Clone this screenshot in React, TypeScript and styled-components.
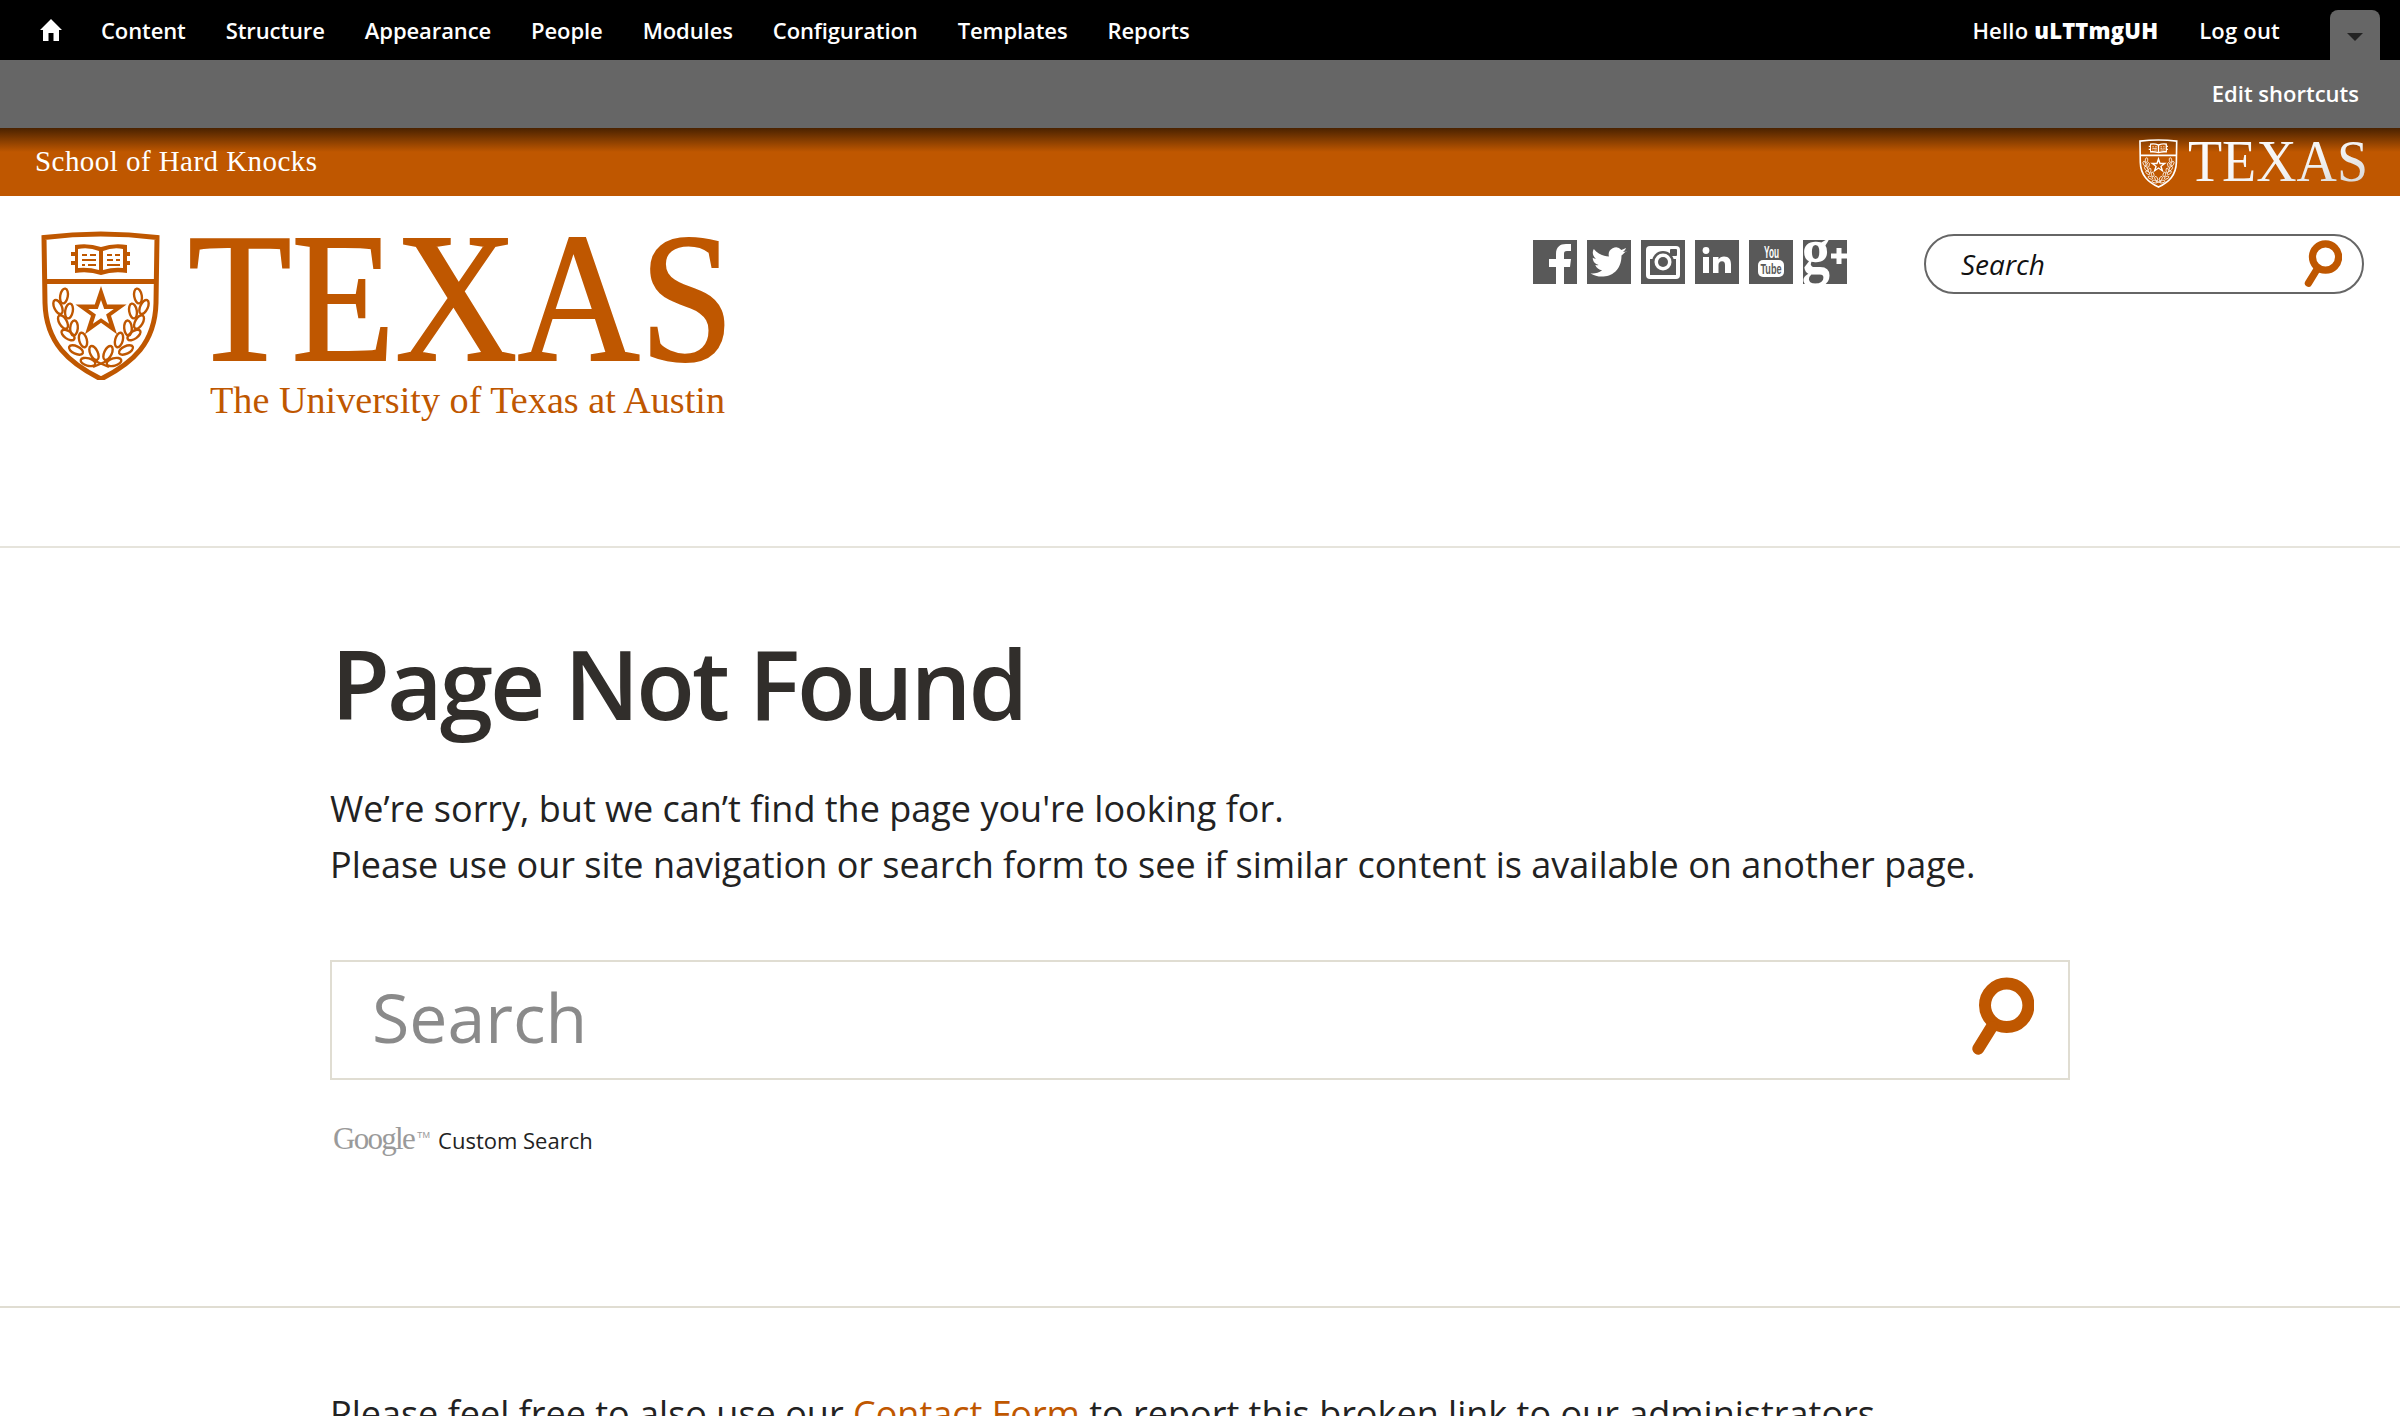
import React from "react";
import styled, { createGlobalStyle } from "styled-components";

const orange = "#bf5700";

const Global = createGlobalStyle`
  html, body { margin: 0; padding: 0; background: #fff; overflow: hidden; }
  body { font-family: "Open Sans", "Liberation Sans", sans-serif; color: #222; }
`;

const Page = styled.div`
  height: 100vh;
  overflow: hidden;
`;

const Toolbar = styled.nav`
  height: 60px;
  background: #000;
  display: flex;
  align-items: center;
  padding-left: 40px;
  position: relative;
`;

const HomeLink = styled.a`
  width: 22px;
  height: 22px;
  margin-right: 39px;
  display: flex;
`;

const NavList = styled.div`
  display: flex;
  gap: 40px;
  flex: 1;
`;

const NavItem = styled.a`
  color: #fff;
  font-size: 22px;
  font-weight: 600;
  letter-spacing: -0.1px;
  white-space: nowrap;
`;

const UserArea = styled.div`
  display: flex;
  align-items: center;
  gap: 41px;
  margin-right: 50px;
  color: #fff;
  font-size: 22px;
  font-weight: 600;
  letter-spacing: 0.2px;
`;

const TrayButton = styled.div`
  width: 50px;
  height: 50px;
  margin: 10px 20px 0 0;
  background: #666;
  border-radius: 8px 8px 0 0;
  display: flex;
  align-items: center;
  justify-content: center;
`;

const Caret = styled.span`
  width: 0;
  height: 0;
  margin-top: 4px;
  border-left: 8px solid transparent;
  border-right: 8px solid transparent;
  border-top: 8px solid #222;
`;

const ShortcutBar = styled.div`
  height: 68px;
  box-sizing: border-box;
  padding: 0 41px 2px 0;
  background: #666;
  display: flex;
  align-items: center;
  justify-content: flex-end;
  color: #fff;
  font-size: 22px;
  font-weight: 600;
`;

const BrandBar = styled.div`
  height: 68px;
  box-sizing: border-box;
  background: linear-gradient(#4a2200 0, ${orange} 24px);
  display: flex;
  align-items: center;
  justify-content: space-between;
  padding: 0 32px 2px 35px;
`;

const SchoolName = styled.a`
  color: #fff;
  font-family: "Liberation Serif", serif;
  font-size: 29px;
  letter-spacing: 0.45px;
`;

const BrandLogo = styled.div`
  display: flex;
  align-items: center;
  gap: 10px;
  margin-top: 4px;
`;

const Header = styled.header`
  height: 352px;
  display: flex;
  justify-content: space-between;
  align-items: flex-start;
  padding: 32px 36px 0 41px;
  border-bottom: 2px solid #e6e4dc;
  box-sizing: border-box;
`;

const Logo = styled.a`
  display: flex;
  align-items: flex-start;
  gap: 28px;
`;

const WordmarkBox = styled.div`
  margin-top: 4px;
  display: flex;
`;

const Tools = styled.div`
  display: flex;
  align-items: flex-start;
  gap: 77px;
  margin-top: 6px;
`;

const Socials = styled.div`
  display: flex;
  gap: 10px;
  margin-top: 6px;
`;

const HeaderSearch = styled.div`
  width: 440px;
  height: 60px;
  box-sizing: border-box;
  border: 2px solid #666;
  border-radius: 30px;
  display: flex;
  align-items: center;
  justify-content: space-between;
  padding: 0 20px 0 35px;
`;

const HeaderSearchLabel = styled.span`
  font-style: italic;
  font-size: 28px;
  color: #111;
`;

const Main = styled.main`
  margin-left: 330px;
  width: 1740px;
  height: 758px;
  padding-top: 75px;
  box-sizing: border-box;
`;

const Title = styled.h1`
  margin: 0 0 0 1px;
  font-size: 96px;
  line-height: 120px;
  font-weight: 600;
  color: #312e2b;
  letter-spacing: -3px;
`;

const Lead = styled.p`
  margin: 38px 0 0;
  font-size: 36px;
  line-height: 56px;
  color: #222;
`;

const BigSearch = styled.div`
  margin-top: 67px;
  height: 120px;
  box-sizing: border-box;
  border: 2px solid #e0ddd2;
  display: flex;
  align-items: center;
  justify-content: space-between;
  padding: 0 34px 0 40px;
`;

const BigSearchLabel = styled.span`
  font-size: 68px;
  color: #8a8a8a;
  margin-bottom: 8px;
`;

const BigSearchIcon = styled.span`
  display: flex;
  margin-bottom: 7px;
`;

const Attribution = styled.div`
  margin: 41px 0 0 3px;
  display: flex;
  align-items: baseline;
  gap: 8px;
`;

const GoogleMark = styled.span`
  font-family: "Liberation Serif", serif;
  font-size: 31px;
  color: #9a9a9a;
  letter-spacing: -1.7px;
`;

const Tm = styled.sup`
  font-family: "Liberation Sans", sans-serif;
  font-size: 9px;
  letter-spacing: 0;
  margin-left: 3px;
`;

const AttributionText = styled.span`
  font-size: 22px;
  color: #222;
`;

const Divider = styled.hr`
  margin: 0;
  border: 0;
  border-top: 2px solid #e0ddd2;
`;

const Foot = styled.p`
  margin: 78px 0 0 330px;
  font-size: 36px;
  line-height: 56px;
  color: #222;
`;

const FootLink = styled.a`
  color: ${orange};
`;

const leaves: [number, number, number][] = [
  [33, 75, 10], [27, 86, -25], [38, 90, 10], [32, 101, -30], [43, 107, 5], [37, 114, -55],
  [52, 119, -15], [45, 129, -65], [63, 132, -25], [57, 141, -75],
];

function Shield({ color, size }: { color: string; size: number }) {
  const paper = color === "#fff" ? orange : "#fff";
  return (
    <svg width={size} height={(size * 152) / 120} viewBox="10 7 120 152" fill="none">
      <path
        d="M13 16.500Q70 9.500 126 16.500L125 82C124 122 102 142 70 158C38 142 15 122 14 82Z"
        stroke={color}
        strokeWidth="5"
      />
      <path d="M14 60.500H125" stroke={color} strokeWidth="5" />
      <path d="M40 31h4v-7q14-2 26 2q12-4 26-2v7h3v4h-3v5h3v4h-3v8q-14-2-26 2q-12-4-26-2v-8h-4v-4h4v-5h-4z" fill={color} />
      <path d="M47 28q11-2 21 2v19q-10-3-21-2zM72 30q10-4 20-2v19q-10-1-20 2z" fill={paper} />
      <path d="M51 34h5M59 34h6M51 39h14M51 44h3M57 44h8M76 34h5M84 34h5M76 39h6M85 39h4M76 44h13" stroke={color} strokeWidth="2.200" />
      <path
        d="M70 65l6.200 18.400 19.400 0-15.600 11.400 6 18.400-16-11.400-16 11.400 6-18.400-15.600-11.400 19.400 0z"
        fill={color}
      />
      <path d="M70 79l3.200 9 9.600 0-7.700 5.600 3 9.200-8.100-5.600-8.100 5.600 3-9.200-7.700-5.600 9.600 0z" fill={paper} />
      {leaves.map(([x, y, r], i) => (
        <g key={i}>
          <ellipse cx={x} cy={y} rx="3.800" ry="7.500" transform={`rotate(${r} ${x} ${y})`} stroke={color} strokeWidth="2.400" />
          <ellipse cx={140 - x} cy={y} rx="3.800" ry="7.500" transform={`rotate(${-r} ${140 - x} ${y})`} stroke={color} strokeWidth="2.400" />
        </g>
      ))}
      <path d="M62 146l14-6M78 146l-14-6" stroke={color} strokeWidth="2.400" />
    </svg>
  );
}

function Wordmark() {
  return (
    <svg width="540" height="190" viewBox="0 0 540 190">
      <text x="-1" y="128" fontFamily="Liberation Serif, serif" fontSize="184" fill={orange} stroke={orange} strokeWidth="2" textLength="546" lengthAdjust="spacingAndGlyphs">
        TEXAS
      </text>
      <text x="21" y="181" fontFamily="Liberation Serif, serif" fontSize="38" fill={orange} textLength="515" lengthAdjust="spacingAndGlyphs">
        The University of Texas at Austin
      </text>
    </svg>
  );
}

function SmallWordmark() {
  return (
    <svg width="180" height="48" viewBox="0 0 180 48">
      <defs>
        <linearGradient id="silver" x1="0" y1="0" x2="1" y2="1">
          <stop offset="0" stopColor="#ffffff" />
          <stop offset="0.6" stopColor="#f2f2f2" />
          <stop offset="1" stopColor="#cfcfcf" />
        </linearGradient>
      </defs>
      <text x="0" y="42" fontFamily="Liberation Serif, serif" fontSize="60" fill="url(#silver)" textLength="180" lengthAdjust="spacingAndGlyphs">
        TEXAS
      </text>
    </svg>
  );
}

function Magnifier({ size }: { size: number }) {
  return (
    <svg width={size} height={(size * 79) / 63} viewBox="0 0 63 79" fill="none" stroke={orange}>
      <circle cx="35.700" cy="28.300" r="21.700" strokeWidth="12" />
      <path d="M20.700 50L7.300 71.700" strokeWidth="12" strokeLinecap="round" />
    </svg>
  );
}

function Tile({ children }: { children: React.ReactNode }) {
  return (
    <svg width="44" height="44" viewBox="0 0 44 44">
      <rect width="44" height="44" fill="#595959" />
      {children}
    </svg>
  );
}

const navItems = ["Content", "Structure", "Appearance", "People", "Modules", "Configuration", "Templates", "Reports"];

export default function App() {
  return (
    <Page>
      <Global />
      <Toolbar>
        <HomeLink>
          <svg viewBox="0 0 22 22" width="22" height="22" fill="#fff">
            <path d="M11 0L22 11H19V22H13.500V14H8.500V22H3V11H0Z" />
          </svg>
        </HomeLink>
        <NavList>
          {navItems.map((n) => (
            <NavItem key={n}>{n}</NavItem>
          ))}
        </NavList>
        <UserArea>
          <span>
            Hello <b>uLTTmgUH</b>
          </span>
          <span>Log out</span>
        </UserArea>
        <TrayButton>
          <Caret />
        </TrayButton>
      </Toolbar>
      <ShortcutBar>Edit shortcuts</ShortcutBar>
      <BrandBar>
        <SchoolName>School of Hard Knocks</SchoolName>
        <BrandLogo>
          <Shield color="#fff" size={39} />
          <SmallWordmark />
        </BrandLogo>
      </BrandBar>
      <Header>
        <Logo>
          <Shield color={orange} size={120} />
          <WordmarkBox>
            <Wordmark />
          </WordmarkBox>
        </Logo>
        <Tools>
          <Socials>
            <Tile>
              <path d="M23 44V27h-7v-8h7v-5c0-7 4-10 10-10h5v7h-4c-2.500 0-3 1-3 3v5h7l-1 8h-6v17z" fill="#fff" />
            </Tile>
            <Tile>
              <path d="M40 11c-1.400.6-2.700 1-4.200 1.100 1.500-.9 2.700-2.300 3.200-4-1.400.8-3 1.400-4.600 1.800a7.300 7.300 0 0 0-12.500 6.600C15.800 16.200 10.400 13.300 6.800 8.900c-2 3.300-1 7.600 2.200 9.800-1.200 0-2.300-.4-3.300-.9 0 3.500 2.500 6.500 5.900 7.200-1.100.3-2.200.3-3.300.1 1 2.900 3.700 5 6.800 5.100-3.400 2.600-7.600 3.700-11.600 3.200 11 7 31 3 31-18 1.600-1.100 3.400-2.900 4.500-4.400z" fill="#fff" />
            </Tile>
            <Tile>
              <rect x="5" y="6" width="34" height="33" rx="4" fill="#fff" />
              <rect x="9" y="19" width="26" height="16" fill="#595959" />
              <circle cx="22" cy="22" r="11" fill="#595959" />
              <circle cx="22" cy="22" r="8.500" fill="#fff" />
              <circle cx="22" cy="22" r="5" fill="#595959" />
              <rect x="29" y="9" width="7" height="7" rx="1" fill="#595959" />
            </Tile>
            <Tile>
              <circle cx="11" cy="10.500" r="3.400" fill="#fff" />
              <rect x="8" y="17" width="6" height="16" fill="#fff" />
              <path d="M18 17h5.500v2.500c1-1.700 3-3 5.500-3 5 0 7 3 7 8V33h-6v-8c0-2.500-.8-3.800-3-3.800-2.300 0-3.500 1.800-3.500 3.800V33H18z" fill="#fff" />
            </Tile>
            <Tile>
              <text x="15" y="18" fontFamily="Liberation Sans, sans-serif" fontWeight="700" fontSize="16" fill="#fff" textLength="15" lengthAdjust="spacingAndGlyphs">You</text>
              <rect x="9" y="20" width="26" height="17" rx="5" fill="#fff" />
              <text x="11.500" y="34" fontFamily="Liberation Sans, sans-serif" fontWeight="700" fontSize="15" fill="#595959" textLength="21" lengthAdjust="spacingAndGlyphs">Tube</text>
            </Tile>
            <Tile>
              <text x="-1" y="33" fontFamily="Liberation Serif, serif" fontWeight="700" fontSize="66" fill="#fff" textLength="28" lengthAdjust="spacingAndGlyphs">g</text>
              <path d="M36 8v16M28 16h16" stroke="#fff" strokeWidth="5" />
            </Tile>
          </Socials>
          <HeaderSearch>
            <HeaderSearchLabel>Search</HeaderSearchLabel>
            <Magnifier size={38} />
          </HeaderSearch>
        </Tools>
      </Header>
      <Main>
        <Title>Page Not Found</Title>
        <Lead>
          We’re sorry, but we can’t find the page you're looking for.
          <br />
          Please use our site navigation or search form to see if similar content is available on another page.
        </Lead>
        <BigSearch>
          <BigSearchLabel>Search</BigSearchLabel>
          <BigSearchIcon>
            <Magnifier size={63} />
          </BigSearchIcon>
        </BigSearch>
        <Attribution>
          <GoogleMark>
            Google<Tm>TM</Tm>
          </GoogleMark>
          <AttributionText>Custom Search</AttributionText>
        </Attribution>
      </Main>
      <Divider />
      <Foot>
        Please feel free to also use our <FootLink>Contact Form</FootLink> to report this broken link to our administrators.
      </Foot>
    </Page>
  );
}
